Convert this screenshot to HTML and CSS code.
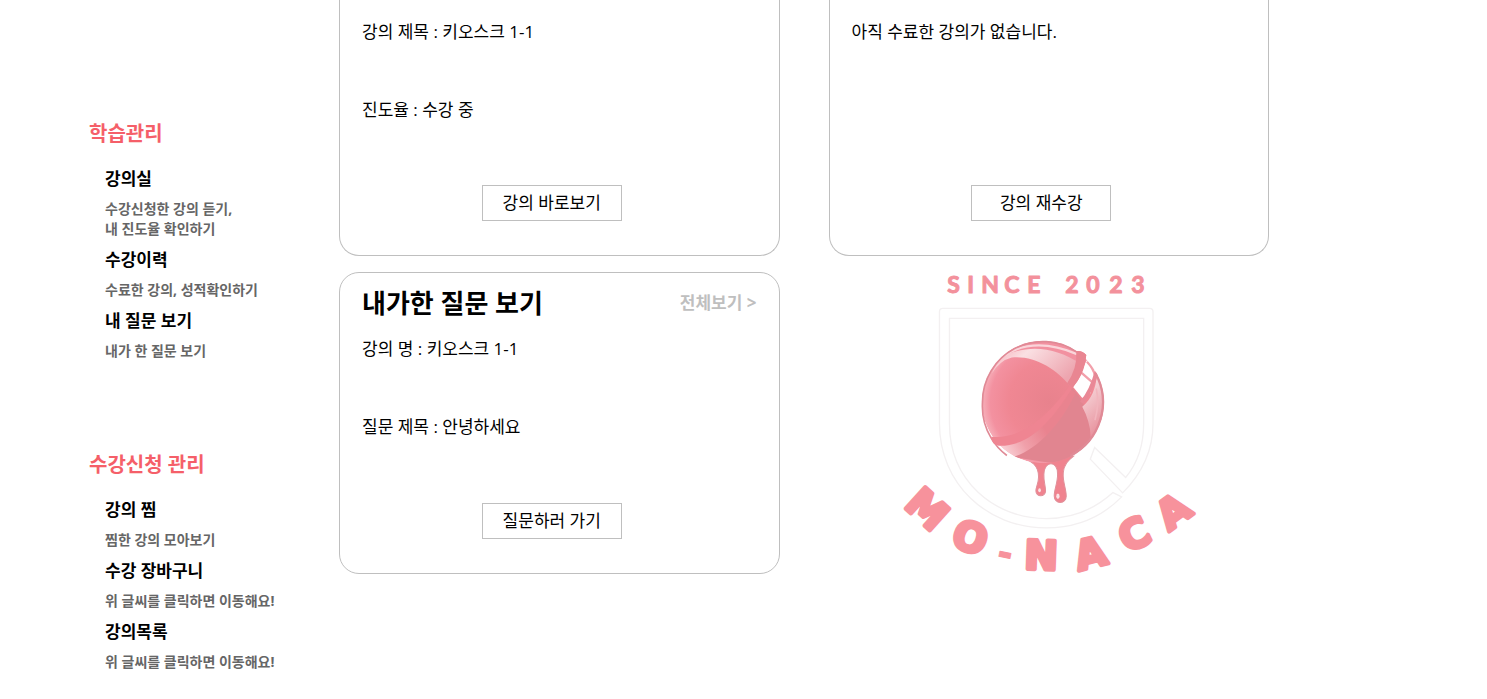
FILE: index.html
```html
<!DOCTYPE html>
<html lang="ko">
<head>
<meta charset="utf-8">
<meta name="viewport" content="width=device-width, initial-scale=1">
<title>MO-NACA</title>
<link rel="stylesheet" href="styles.css">
</head>
<body>
<div class="page">
  <nav class="sidebar">
    <section class="menu">
      <h2 class="menu-title">학습관리</h2>
      <ul class="menu-list">
        <li class="menu-item"><a class="menu-link" href="#">강의실</a><p class="menu-desc">수강신청한 강의 듣기,<br>내 진도율 확인하기</p></li>
        <li class="menu-item"><a class="menu-link" href="#">수강이력</a><p class="menu-desc">수료한 강의, 성적확인하기</p></li>
        <li class="menu-item"><a class="menu-link" href="#">내 질문 보기</a><p class="menu-desc">내가 한 질문 보기</p></li>
      </ul>
    </section>
    <section class="menu">
      <h2 class="menu-title">수강신청 관리</h2>
      <ul class="menu-list">
        <li class="menu-item"><a class="menu-link" href="#">강의 찜</a><p class="menu-desc">찜한 강의 모아보기</p></li>
        <li class="menu-item"><a class="menu-link" href="#">수강 장바구니</a><p class="menu-desc">위 글씨를 클릭하면 이동해요!</p></li>
        <li class="menu-item"><a class="menu-link" href="#">강의목록</a><p class="menu-desc">위 글씨를 클릭하면 이동해요!</p></li>
      </ul>
    </section>
  </nav>

  <main class="cards">
    <section class="card card-open">
      <div class="card-body">
        <p>강의 제목 : 키오스크 1-1</p>
        <p>진도율 : 수강 중</p>
      </div>
      <div class="card-action"><button class="btn" type="button">강의 바로보기</button></div>
    </section>

    <section class="card card-open">
      <div class="card-body">
        <p>아직 수료한 강의가 없습니다.</p>
      </div>
      <div class="card-action"><button class="btn" type="button">강의 재수강</button></div>
    </section>

    <section class="card">
      <header class="card-head">
        <h2 class="card-title">내가한 질문 보기</h2>
        <a class="card-more" href="#">전체보기 &gt;</a>
      </header>
      <div class="card-body">
        <p>강의 명 : 키오스크 1-1</p>
        <p>질문 제목 : 안녕하세요</p>
      </div>
      <div class="card-action"><button class="btn" type="button">질문하러 가기</button></div>
    </section>

    <svg class="logo" viewBox="829 272 440 302" role="img" aria-label="MO-NACA since 2023">
      <defs>
        <radialGradient id="core" cx="0.55" cy="0.5" r="0.6">
          <stop offset="0" stop-color="#e8828d"/>
          <stop offset="0.55" stop-color="#f08793"/>
          <stop offset="0.8" stop-color="#f391a0"/>
          <stop offset="1" stop-color="#f9c6cd"/>
        </radialGradient>
        <linearGradient id="sheen" x1="0" y1="0" x2="1" y2="0.5">
          <stop offset="0" stop-color="#f5a5b0"/>
          <stop offset="0.4" stop-color="#fae0e3"/>
          <stop offset="1" stop-color="#eda5af"/>
        </linearGradient>
        <linearGradient id="low" gradientUnits="userSpaceOnUse" x1="330" y1="580" x2="460" y2="500">
          <stop offset="0" stop-color="#fbdade"/>
          <stop offset="0.5" stop-color="#f0a0aa"/>
          <stop offset="1" stop-color="#e9838f"/>
        </linearGradient>
        <linearGradient id="side" x1="0" y1="0" x2="0.4" y2="1">
          <stop offset="0" stop-color="#fbeaec"/>
          <stop offset="1" stop-color="#e8939e"/>
        </linearGradient>
        <clipPath id="ball"><circle cx="458" cy="426" r="183"/></clipPath>
      </defs>

      <g transform="translate(890 260) scale(0.3333)">
        <path class="shield" d="M697 698 L600 597 L613 562 L706 652 C745 605 760 550 760 490 V175 H178 V490 C178 660 310 775 468 775 C545 775 615 745 668 697 L694 710 C630 775 550 803 468 803 C290 803 148 670 148 490 V155 Q148 145 158 145 H778 Q788 145 788 155 V490 C788 570 755 640 697 698 Z"/>

        <path class="drip" d="M380 588 C430 600 445 620 445 650 C445 670 437 680 437 692 A14 14 0 0 0 466 692 C466 675 460 665 461 642 C462 600 503 600 502 642 C502 670 491 690 492 708 A18 19 0 0 0 528 708 C528 685 517 665 519 638 C521 612 535 600 550 588 Z"/>
        <ellipse class="glint" cx="448" cy="690" rx="4" ry="6"/>
        <ellipse class="glint" cx="503" cy="708" rx="5" ry="8"/>

        <g clip-path="url(#ball)">
          <circle cx="458" cy="426" r="183" fill="url(#core)"/>
          <path fill="url(#sheen)" d="M305 340 C350 240 450 235 545 275 L566 292 Q560 340 543 382 C500 325 430 285 365 292 Q330 300 305 340 Z"/>
          <path fill="#f291a0" d="M345 285 C420 252 500 262 572 312 L600 240 L400 220 Z"/>
          <path fill="none" stroke="#fad5da" stroke-width="7" d="M335 290 C400 246 480 248 560 282"/>
          <path fill="#e18590" d="M545 383 C590 430 606 490 600 560 Q540 615 460 605 L365 590 Q500 520 545 383 Z"/>
          <path fill="url(#low)" d="M300 555 C400 560 500 480 540 388 L556 398 C510 500 420 590 350 592 Z"/>
          <path fill="#fff" d="M548 380 L590 300 L625 320 L600 400 L576 414 Z"/>
          <path fill="url(#side)" d="M576 440 C604 418 616 386 620 345 L650 400 L640 470 L602 530 Q598 480 576 440 Z"/>
          <path fill="none" stroke="#f2a0ab" stroke-width="7" d="M574 338 L610 370 M590 305 Q610 325 616 352"/>
          <path fill="none" stroke="#e98896" stroke-width="12" d="M574 428 Q604 392 619 335"/>
          <path fill="none" stroke="#f2b6be" stroke-width="5" d="M618 385 Q628 430 614 480"/>
        </g>
        <path class="rim" d="M350 586 A181 181 0 0 1 303 534 A187 187 0 0 1 277 426 A181 181 0 0 1 560 276"/>
        <path class="rim rim-right" d="M616 340 A181 181 0 0 1 540 587"/>
        <path class="band" d="M303 530 C400 540 480 455 530 388 Q565 335 560 273 Q576 271 588 285 C582 340 565 360 547 382 C490 470 425 560 325 557 Q303 552 303 530 Z"/>
        <path class="band-end" d="M558 273 Q576 271 588 285 Q580 345 548 382 L530 370 Q562 325 558 273 Z"/>
      </g>

      <text class="since" x="947 967 981 1004 1027 1040 1065 1086 1109 1131" y="293">SINCE 2023</text>

      <g class="arc-name">
        <text transform="translate(927 509) rotate(42)" y="14">M</text>
        <text transform="translate(970 537) rotate(20)" y="14">O</text>
        <text class="dash" transform="translate(1005 554) rotate(12)" y="11">-</text>
        <text transform="translate(1041 555) rotate(2)" y="14">N</text>
        <text transform="translate(1090 553) rotate(-14)" y="14">A</text>
        <text transform="translate(1134 534) rotate(-26)" y="14">C</text>
        <text transform="translate(1173 511) rotate(-36)" y="14">A</text>
      </g>
    </svg>
  </main>
</div>
</body>
</html>
```
FILE: styles.css
```css
* {
  box-sizing: border-box;
}

body {
  margin: 0;
  background: #fff;
  color: #000;
  font-family: "Open Sans", "Noto Sans CJK KR", sans-serif;
  font-size: 17px;
  line-height: 24px;
}

h2,
p,
ul {
  margin: 0;
  padding: 0;
}

a {
  color: inherit;
  text-decoration: none;
}

.page {
  display: grid;
  grid-template-columns: 250px 1fr;
  padding: 0 218px 0 89px;
}

.sidebar {
  display: flex;
  flex-direction: column;
  gap: 90px;
  padding-top: 120px;
}

.menu {
  display: flex;
  flex-direction: column;
  gap: 19px;
}

.menu-title {
  color: #f55f69;
  font-size: 20px;
  line-height: 28px;
}

.menu-list {
  display: flex;
  flex-direction: column;
  gap: 9px;
  padding-left: 16px;
  list-style: none;
}

.menu-item {
  display: flex;
  flex-direction: column;
  gap: 8px;
}

.menu-link {
  font-weight: 700;
}

.menu-desc {
  color: #666;
  font-size: 14px;
  font-weight: 700;
  line-height: 20px;
}

.cards {
  display: grid;
  grid-template-columns: 1fr 1fr;
  align-content: start;
  gap: 16px 49px;
}

.card {
  display: flex;
  flex-direction: column;
  justify-content: space-between;
  padding: 12px 22px 34px;
  min-height: 302px;
  border: 1px solid #bfbfbf;
  border-radius: 20px;
}

.card-open {
  padding-top: 20px;
  min-height: 256px;
  border-top: 0;
  border-radius: 0 0 20px 20px;
}

.card-head {
  display: flex;
  align-items: center;
  justify-content: space-between;
  margin-bottom: 16px;
}

.card-title {
  font-size: 26px;
  line-height: 36px;
}

.card-more {
  color: #bfbfbf;
  font-weight: 700;
}

.card-body {
  display: flex;
  flex: 1;
  flex-direction: column;
  gap: 54px;
}

.card-action {
  display: flex;
  justify-content: center;
  padding-right: 15px;
}

.btn {
  width: 140px;
  height: 36px;
  padding: 0;
  border: 1px solid #bfbfbf;
  background: #fff;
  color: #000;
  font: inherit;
}

.logo {
  display: block;
  width: 100%;
  overflow: visible;
}

.shield {
  fill: #fff;
  stroke: #f3f0f1;
  stroke-width: 4;
}

.drip {
  fill: #f0838f;
  stroke: #e0909a;
  stroke-width: 3;
}

.glint {
  fill: #fbe3e6;
}

.rim {
  fill: none;
  stroke: #e08a96;
  stroke-width: 5;
}

.rim-right {
  stroke-width: 7;
}

.band {
  fill: #ef8592;
}

.band-end {
  fill: #e98692;
}

.since {
  fill: #f3919c;
  stroke: #f3919c;
  stroke-width: 1;
  stroke-linejoin: round;
  font-family: Lato, sans-serif;
  font-size: 23px;
  font-weight: 700;
}

.arc-name {
  fill: #f7929c;
  stroke: #f7929c;
  stroke-width: 4;
  stroke-linejoin: round;
  font-family: "DejaVu Sans", sans-serif;
  font-size: 40px;
  font-weight: 700;
  text-anchor: middle;
}

.dash {
  stroke-width: 1;
  font-size: 36px;
}
```
